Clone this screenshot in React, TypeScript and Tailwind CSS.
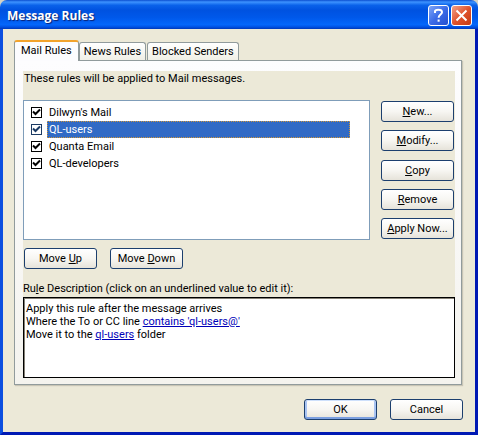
import { useState } from 'react'
import type { ReactNode } from 'react'
import clsx from 'clsx'

interface Rule {
  id: string
  name: string
  enabled: boolean
}

const initialRules: Rule[] = [
  { id: 'dilwyn', name: "Dilwyn's Mail", enabled: true },
  { id: 'ql-users', name: 'QL-users', enabled: true },
  { id: 'quanta', name: 'Quanta Email', enabled: true },
  { id: 'ql-developers', name: 'QL-developers', enabled: true },
]

const tabs = ['Mail Rules', 'News Rules', 'Blocked Senders']

function DialogButton({ children, isDefault = false }: { children: ReactNode; isDefault?: boolean }) {
  return (
    <button
      type="button"
      className={clsx(
        'h-[21px] w-[73px] rounded-[3px] border border-[#1c3f6e] bg-gradient-to-b from-white via-[#f7f6f2] to-[#e6e3da] text-center leading-[19px] whitespace-nowrap',
        isDefault && 'shadow-[inset_0_1px_0_#cee0fb,inset_0_-2px_0_#7b9fe0,inset_2px_0_0_#a9c4f2,inset_-2px_0_0_#a9c4f2]'
      )}
    >
      {children}
    </button>
  )
}

function TitleBar() {
  return (
    <header className="flex h-[29px] shrink-0 items-center justify-between rounded-t-[7px] bg-[linear-gradient(to_bottom,#0b4fd0_0%,#3d93ff_7%,#0a62ea_18%,#0052e0_35%,#0058ea_60%,#0467fb_85%,#0052e4_93%,#0038b8_100%)] pt-[2px] pr-[6px] pl-[7px]">
      <h1 className="font-['Open_Sans','Noto_Sans',sans-serif] text-[12px] leading-[20px] font-bold text-white [text-shadow:1px_1px_1px_#0a1f70]">
        Message Rules
      </h1>
      <div className="flex gap-[2px]">
        <button
          type="button"
          aria-label="Help"
          className="flex h-[21px] w-[21px] items-center justify-center rounded-[3px] border border-white bg-gradient-to-br from-[#7fa4f5] via-[#3c6be8] to-[#2450cf]"
        >
          <svg width="13" height="15" viewBox="0 0 13 15" fill="none" stroke="white" strokeWidth="2">
            <path d="M3 5V3.6C3 2.4 4.2 1.8 6.3 1.8S10 2.6 10 4.2C10 6.6 6.6 6.6 6.6 9.8" />
            <path d="M6.6 11.5V13.7" />
          </svg>
        </button>
        <button
          type="button"
          aria-label="Close"
          className="flex h-[21px] w-[21px] items-center justify-center rounded-[3px] border border-white bg-gradient-to-br from-[#f0a088] via-[#e0532c] to-[#c43a12]"
        >
          <svg width="13" height="13" viewBox="0 0 13 13" stroke="white" strokeWidth="2">
            <path d="M1.5 1.5L11.5 11.5M11.5 1.5L1.5 11.5" />
          </svg>
        </button>
      </div>
    </header>
  )
}

export default function App() {
  const [rules, setRules] = useState(initialRules)
  const [selected, setSelected] = useState('ql-users')
  const [activeTab, setActiveTab] = useState('Mail Rules')

  const toggleRule = (id: string) => {
    setRules((prev) => prev.map((rule) => (rule.id === id ? { ...rule, enabled: !rule.enabled } : rule)))
  }

  return (
    <div className="flex min-h-screen flex-col bg-[#d5d2c4] font-['Roboto','Liberation_Sans',sans-serif] text-[11px] leading-[13px] text-black">
      <TitleBar />
      <main className="flex grow flex-col border-x-[3px] border-b-[3px] border-t-0 border-r-[#0019b4] border-b-[#0019b4] border-l-[#0c4fe0] bg-[#ece9d8] pt-[11px] pr-[12px] pb-[12px] pl-[11px]">
        {/* Tabs */}
        <div role="tablist" className="flex h-[20px] items-end">
          {tabs.map((tab) => (
            <button
              key={tab}
              type="button"
              role="tab"
              aria-selected={tab === activeTab}
              onClick={() => setActiveTab(tab)}
              className={clsx(
                'rounded-t-[3px] border border-b-0 whitespace-nowrap',
                tab === activeTab
                  ? 'z-10 -mb-px h-[21px] border-[#919b9c] border-t-2 border-t-[#f2a32c] bg-[#fcfcfe] px-[6px] pb-[3px]'
                  : 'mr-px h-[18px] border-[#919b9c] bg-gradient-to-b from-white to-[#f0efe6] px-[4px]'
              )}
            >
              {tab}
            </button>
          ))}
        </div>

        {/* Tab page */}
        <section className="mr-px border border-[#919b9c] bg-gradient-to-b from-[#fdfdfe] to-[#f4f3ee] pt-[10px] pr-[6px] pb-[6px] pl-[8px] shadow-[1px_1px_1px_#c8c5b5]">
          <div className="bg-[#ece9d8]">
            <p className="pt-px pl-px">These rules will be applied to Mail messages.</p>

            <div className="mt-[15px] flex justify-between gap-[11px]">
              <ul className="h-[140px] grow border border-[#7f9db9] bg-white pt-[3px] pr-[19px] pl-[7px]">
                {rules.map((rule) => (
                  <li key={rule.id} className="flex h-[17px] items-center gap-[5px]">
                    <span className="grid h-[11px] w-[11px]">
                      <input
                        type="checkbox"
                        checked={rule.enabled}
                        onChange={() => toggleRule(rule.id)}
                        aria-label={rule.name}
                        className={clsx(
                          'col-start-1 row-start-1 h-[11px] w-[11px] appearance-none border bg-white',
                          rule.id === selected ? 'border-[#1b3a63]' : 'border-black'
                        )}
                      />
                      {rule.enabled && (
                        <svg
                          className="pointer-events-none col-start-1 row-start-1"
                          width="11"
                          height="11"
                          viewBox="0 0 11 11"
                          fill="none"
                          stroke={rule.id === selected ? '#1b3a63' : 'black'}
                          strokeWidth="2"
                        >
                          <path d="M2 4.5L4.5 7L9 2.5" />
                        </svg>
                      )}
                    </span>
                    <button
                      type="button"
                      onClick={() => setSelected(rule.id)}
                      className={clsx(
                        'h-[17px] grow border border-dotted pl-px text-left',
                        rule.id === selected ? 'border-[#ce953a] bg-[#316ac5] text-white' : 'border-transparent'
                      )}
                    >
                      {rule.name}
                    </button>
                  </li>
                ))}
              </ul>
              <div className="flex flex-col justify-between py-px pr-px">
                <DialogButton><u>N</u>ew...</DialogButton>
                <DialogButton><u>M</u>odify...</DialogButton>
                <DialogButton><u>C</u>opy</DialogButton>
                <DialogButton><u>R</u>emove</DialogButton>
                <DialogButton><u>A</u>pply Now...</DialogButton>
              </div>
            </div>

            <div className="mt-[8px] ml-px flex gap-[13px]">
              <DialogButton>Move <u>U</u>p</DialogButton>
              <DialogButton>Move <u>D</u>own</DialogButton>
            </div>

            <h2 id="rule-description" className="mt-[13px]">
              Ru<u>l</u>e Description (click on an underlined value to edit it):
            </h2>
            <div
              role="group"
              aria-labelledby="rule-description"
              className="mt-[2px] h-[81px] border border-black bg-white pt-[4px] pl-[2px] shadow-[inset_1px_1px_0_#848075]"
            >
              <p>Apply this rule after the message arrives</p>
              <p>
                Where the To or CC line <a href="#contains" className="text-[#0000b8] underline">contains 'ql-users@'</a>
              </p>
              <p>
                Move it to the <a href="#folder" className="text-[#0000b8] underline">ql-users</a> folder
              </p>
            </div>
          </div>
        </section>

        <footer className="mt-auto flex justify-end gap-[13px]">
          <DialogButton isDefault>OK</DialogButton>
          <DialogButton>Cancel</DialogButton>
        </footer>
      </main>
    </div>
  )
}
